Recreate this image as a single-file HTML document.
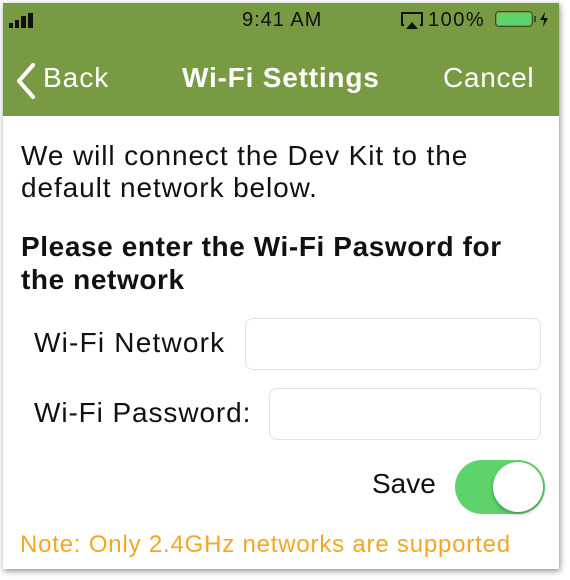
<!DOCTYPE html>
<html><head><meta charset="utf-8"><style>
body{margin:0;width:570px;height:580px;background:#fff;position:relative;overflow:hidden;font-family:"Liberation Sans",sans-serif}
#frame{position:absolute;left:3px;top:3px;width:556px;height:566px;background:#fff;box-shadow:1px 2px 6px rgba(0,0,0,.45);overflow:hidden}
#hdr{position:absolute;left:0;top:0;width:556px;height:113px;background:#789a42}
.t{position:absolute;white-space:nowrap}
.box{position:absolute;border:1px solid #e2e2e2;border-radius:8px;background:#fff}
</style></head><body>
<div id="frame">
<div id="hdr">
 <svg class="t" style="left:6px;top:10px" width="30" height="16"><rect x="0" y="10" width="4" height="5" fill="#111"/><rect x="6" y="7" width="4" height="8" fill="#111"/><rect x="12" y="3" width="5" height="12" fill="#111"/><rect x="19" y="0" width="5" height="15" fill="#111"/></svg>
 <div class="t" style="left:239px;top:6px;font-size:20px;color:#111;letter-spacing:1px">9:41 AM</div>
 <svg class="t" style="left:398px;top:9px" width="22" height="18"><path d="M3 13H1V1h20v12h-2" fill="none" stroke="#111" stroke-width="2"/><path d="M5 17L11 10L17 17Z" fill="#111"/></svg>
 <div class="t" style="left:425px;top:6px;font-size:20px;color:#111;letter-spacing:1.5px">100%</div>
 <div class="t" style="left:492px;top:8px;width:38px;height:16px;border:1px solid #3a5020;border-radius:4px;box-sizing:border-box;padding:1px"><div style="width:100%;height:100%;background:#5fd36b;border-radius:2px"></div></div>
 <div class="t" style="left:531px;top:13px;width:2px;height:6px;background:#3a5020"></div>
 <svg class="t" style="left:537px;top:9px" width="8" height="15"><path d="M5 0L0 8H4L3 15L8 6H4Z" fill="#111"/></svg>
 <svg class="t" style="left:11px;top:59px" width="24" height="38"><path d="M19 3L5 19L19 35" fill="none" stroke="#fff" stroke-width="4" stroke-linecap="round" stroke-linejoin="round"/></svg>
 <div class="t" style="left:40px;top:59px;font-size:28px;color:#fff;letter-spacing:1px">Back</div>
 <div class="t" style="left:179px;top:59px;font-size:28px;color:#fff;font-weight:bold;letter-spacing:0.8px">Wi-Fi Settings</div>
 <div class="t" style="left:440px;top:59px;font-size:28px;color:#fff;letter-spacing:0.7px">Cancel</div>
</div>
<div class="t" style="left:18px;top:137px;font-size:28px;line-height:32px;color:#111;letter-spacing:0.9px">We will connect the Dev Kit to the<br>default network below.</div>
<div class="t" style="left:18px;top:227px;font-size:28px;line-height:33px;color:#111;font-weight:bold;letter-spacing:0.6px">Please enter the Wi-Fi Pasword for<br>the network</div>
<div class="t" style="left:31px;top:324px;font-size:28px;color:#111;letter-spacing:1.2px">Wi-Fi Network</div>
<div class="box" style="left:242px;top:315px;width:294px;height:50px"></div>
<div class="t" style="left:31px;top:394px;font-size:28px;color:#111;letter-spacing:0.9px">Wi-Fi Password:</div>
<div class="box" style="left:266px;top:385px;width:270px;height:50px"></div>
<div class="t" style="left:369px;top:465px;font-size:28px;color:#111">Save</div>
<div class="t" style="left:452px;top:457px;width:90px;height:54px;border-radius:27px;background:#5fd36b"></div>
<div class="t" style="left:490px;top:459px;width:50px;height:50px;border-radius:25px;background:#fff;box-shadow:0 2px 4px rgba(0,0,0,.3)"></div>
<div class="t" style="left:17px;top:528px;font-size:24px;color:#f5a623;letter-spacing:0.8px">Note: Only 2.4GHz networks are supported</div>
</div>
</body></html>
